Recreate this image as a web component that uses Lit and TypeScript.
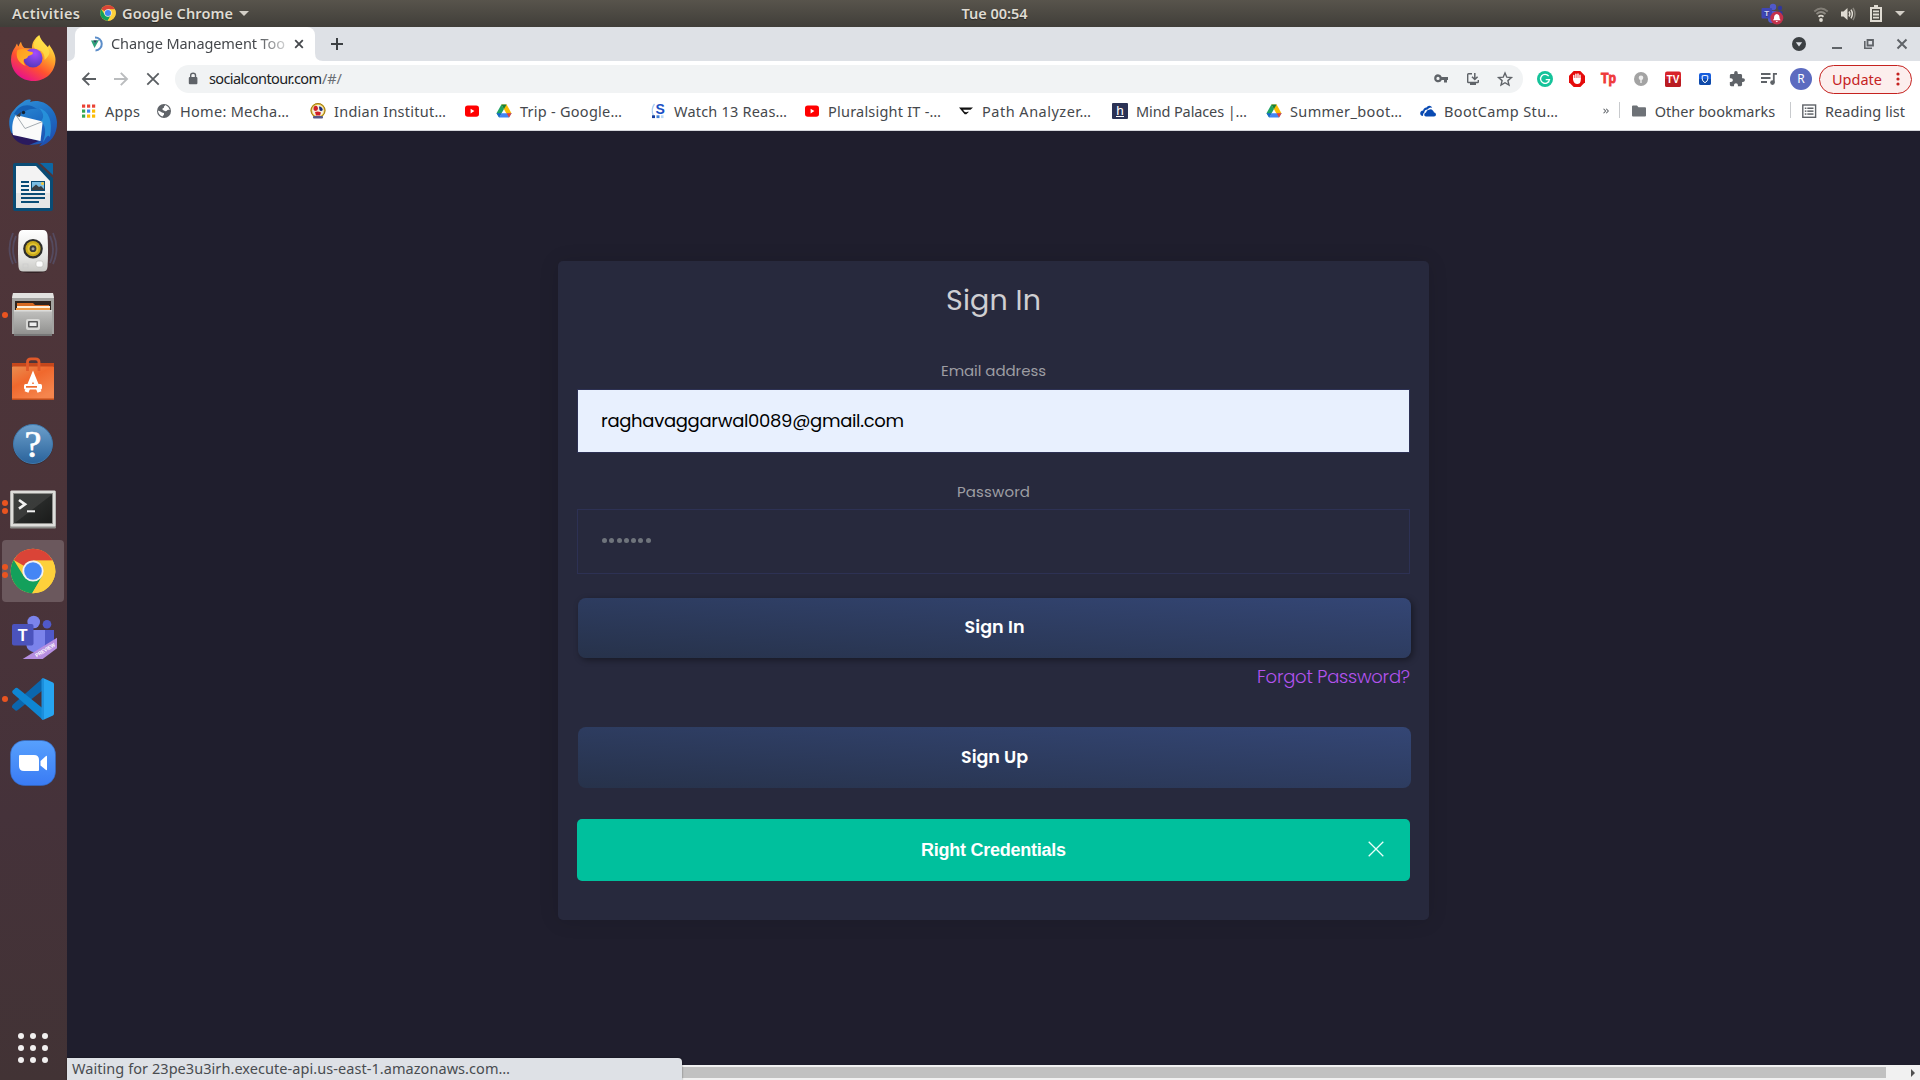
import { LitElement, html, svg, css, nothing } from "lit";
import { customElement, property } from "lit/decorators.js";
import { styleMap } from "lit/directives/style-map.js";

/* ---------- text label spread to a fixed measure ---------- */

@customElement("fit-label")
class FitLabel extends LitElement {
  @property() text = "";
  @property({ type: Number }) w = 0;

  static styles = css`
    :host { display: block; flex: none; white-space: pre; }
    .box { display: block; overflow: visible; }
    .t { display: inline-block; }
  `;

  firstUpdated() {
    const t = this.renderRoot.querySelector(".t") as HTMLElement;
    const n = this.text.length;
    if (n > 1 && this.w) {
      const natural = t.getBoundingClientRect().width;
      t.style.letterSpacing = ((this.w - natural) / (n - 1)).toFixed(3) + "px";
    }
  }

  render() {
    return html`<span class="box" style=${styleMap({ width: this.w + "px" })}><span class="t">${this.text}</span></span>`;
  }
}

/* ---------- icons ---------- */

const chromeLogo = svg`
  <circle cx="24" cy="24" r="22.3" fill="#fdd03b"/>
  <path d="M24 24 L4.7 12.9 A22.3 22.3 0 0 1 43.7 13.5 L24 13.5Z" fill="#da4437"/>
  <path d="M24 24 L43.6 13.5 L24 13.5 L14.5 19Z" fill="#da4437"/>
  <path d="M4.7 12.9 A22.3 22.3 0 0 0 23.2 46.3 L33.2 29.2 L24 33 L14.8 29.2Z" fill="#13a05b"/>
  <path d="M33.2 29.2 L23.2 46.3 A22.3 22.3 0 0 0 43.7 13.5 L24 13.5Z" fill="#fdd03b"/>
  <circle cx="24" cy="24" r="10.6" fill="#f1f1f1"/>
  <circle cx="24" cy="24" r="8.8" fill="#4486f5"/>`;

const drive = svg`
  <path d="M5.4 1.5h5.2l5 9h-5.2z" fill="#fbbc04"/>
  <path d="M5.4 1.5 8 6 3.1 14.5.5 10.3z" fill="#1ea362"/>
  <path d="M5.4 1.5h5.2L8 6z" fill="#188038"/>
  <path d="M5.6 10.3h10L13 14.5H3.1z" fill="#4285f4"/>
  <path d="M10.6 10.3h5L13 14.5z" fill="#ea4335"/>
  <path d="M.5 10.3h5.1l-2.5 4.2z" fill="#1967d2"/>`;

const youtube = svg`<rect x="1" y="2.4" width="14" height="11.4" rx="2.8" fill="#f00"/><path d="M6.6 5.8v4.6l3.8-2.3z" fill="#fff"/>`;

const dockIcons: Record<string, unknown> = {
  firefox: svg`
    <defs>
      <linearGradient id="ff1" x1=".8" y1=".05" x2=".25" y2=".95"><stop offset="0" stop-color="#fff44f"/><stop offset=".35" stop-color="#ffa52a"/><stop offset=".65" stop-color="#ff5130"/><stop offset="1" stop-color="#e8118c"/></linearGradient>
      <radialGradient id="ff2" cx=".6" cy=".25" r=".8"><stop offset="0" stop-color="#a64bff"/><stop offset="1" stop-color="#5038b8"/></radialGradient>
      <linearGradient id="ff3" x1="0" y1="0" x2="1" y2="1"><stop offset="0" stop-color="#ff9a1f"/><stop offset="1" stop-color="#ffbd2e"/></linearGradient>
    </defs>
    <path d="M2 25C2 19 4 15 6.5 11.500C7 10 7.500 9 8 8.500C8.500 10 9 11 9.500 11.500C10 9.500 11 8 12 6.700C12.500 9 13.500 11.500 15.500 13L23 13.500C22.500 8 26 3 30.300 0C31.500 5 35.500 8 38.500 12C39.500 11.500 40 10.500 40 9.500C43 14 46.700 19 46.500 25C46 38 36 46 24.500 46C12 46 2.500 37 2 25Z" fill="url(#ff1)"/>
    <path d="M30.500 1C24.500 6 23 11 26.500 14C34 15 36 20 35.500 25C41 20 42 17 38 11.500C34.500 8 31.500 5 30.500 1Z" fill="#ffe14a" opacity=".75"/>
    <circle cx="24" cy="23" r="9.600" fill="url(#ff2)"/>
    <path d="M8.500 15C13 13 17 14 19 16C21 17 24 16.500 24 18C23.500 20.500 19.500 20 19 21.500C18.500 23 17 24 15.500 24C13.500 25 15 29 17 31C9 28 6 21 8.500 15Z" fill="url(#ff3)"/>`,
  thunderbird: svg`
    <defs><linearGradient id="tb1" x1=".2" y1="0" x2=".7" y2="1"><stop offset="0" stop-color="#2f8fd8"/><stop offset=".5" stop-color="#1d6ec4"/><stop offset="1" stop-color="#1f4fb0"/></linearGradient></defs>
    <path d="M14 3C16 1 19 0 22 1L21 3C34 -1 47 9 48 23C48.500 36 41 45 30 47.500L33 44C22 48 8 45 3 35C-1 28-1 16 5 11C8 7 11 5 14 3Z" fill="url(#tb1)"/>
    <path d="M2 34C5 42 12 46 20 46L30 42L5 35Z" fill="#2a1a5e"/>
    <path d="M7 16L33.700 22.500L31.500 42L4 36C2.500 30 3 21 7 16Z" fill="#fafafa"/>
    <path d="M7 16L16 29.500L33.700 22.500" fill="none" stroke="#9aa1a8" stroke-width=".9"/>
    <path d="M30 9C40 12 44 22 41 38C38 34 37 40 34 43C38 32 36 26 32 22C36 18 34 13 30 9Z" fill="#2a9be0" opacity=".75"/>
    <path d="M5 15C9 6 20 3 28 10C20 9 14 13 11 17Z" fill="#1660b5"/>
    <circle cx="14.500" cy="13.500" r="1.700" fill="#123"/><path d="M7 17L12 13L11 18Z" fill="#3b3f46"/>`,
  writer: svg`
    <path d="M6 0H28L44 15V46Q44 48 42 48H6Q4 48 4 46V2Q4 0 6 0Z" fill="#0a4c75"/>
    <path d="M31 0H43Q44 0 44 1V12Z" fill="#0d67a4"/>
    <path d="M7 3H27L41 18V45H7Z" fill="#f3f3f3"/><path d="M7 30H41V45H7Z" fill="#e0e0e0" opacity=".7"/>
    <g fill="#0a4c75"><rect x="12" y="18" width="8" height="2"/><rect x="12" y="22" width="8" height="2"/><rect x="12" y="26" width="8" height="2"/><rect x="12" y="30" width="24" height="2"/><rect x="12" y="34" width="24" height="2"/><rect x="12" y="38" width="18" height="2"/></g>
    <rect x="22" y="18" width="14" height="10" fill="#0a4c75"/><rect x="23" y="19" width="12" height="8" fill="#7bbde2"/>
    <path d="M23 27V25L27 21.500L30 24L32 23L35 26V27Z" fill="#3b3f42"/><circle cx="33.500" cy="20.500" r="1.500" fill="#f5c63a"/>`,
  rhythmbox: svg`
    <defs><linearGradient id="rb1" x1="0" y1="0" x2="0" y2="1"><stop offset="0" stop-color="#fff"/><stop offset=".7" stop-color="#e2e2e0"/><stop offset="1" stop-color="#c9c9c6"/></linearGradient></defs>
    <g fill="none" stroke="#5e6c99" stroke-opacity=".4" stroke-width="1.800"><path d="M7 9Q1 22 7 36M4 6Q-3 22 4 37M41 9Q47 22 41 36M44 6Q51 22 44 37"/></g>
    <ellipse cx="24" cy="44" rx="13" ry="2" fill="#000" opacity=".35"/>
    <path d="M14 3H34Q38 3 38.500 8Q39.500 24 38.500 40Q38 44.500 34 44.500H14Q10 44.500 9.500 40Q8.500 24 9.500 8Q10 3 14 3Z" fill="url(#rb1)"/>
    <circle cx="24" cy="21.700" r="9.800" fill="#2d2d2b"/><circle cx="24" cy="21.700" r="7.600" fill="#c9a91a"/><circle cx="24" cy="21.700" r="5.500" fill="#e2c534"/><circle cx="24" cy="21.700" r="3.400" fill="#3c3c3a"/><circle cx="24" cy="21.700" r="1.500" fill="#a7a79f"/>
    <rect x="14" y="37" width="5" height="4" fill="none" stroke="#ccc" stroke-width=".7"/><rect x="27" y="34" width="7" height="6" rx="2" fill="#fbfbfb" stroke="#bdbdb9" stroke-width=".6"/>`,
  files: svg`
    <defs><linearGradient id="fl1" x1="0" y1="0" x2="0" y2="1"><stop offset="0" stop-color="#c2c2c0"/><stop offset="1" stop-color="#8d8d8b"/></linearGradient></defs>
    <path d="M4 2H44L45 8V43H3V8Z" fill="#a3a3a1"/><path d="M4 2H44L45 7H3Z" fill="#e2e2e0"/>
    <rect x="6" y="10" width="36" height="12" fill="#2e241f"/>
    <path d="M8 12H24L26 14H40V21H8Z" fill="#d76a22"/><rect x="8" y="15" width="33" height="2" fill="#fff0dc"/><rect x="7" y="17" width="34" height="4" fill="#f09a45"/>
    <path d="M5 19H43V45H5Z" fill="url(#fl1)"/><path d="M5 19H43V20.500H5Z" fill="#dcdcda"/><path d="M5 43H43V45H5Z" fill="#777"/>
    <rect x="17" y="28" width="14" height="11" rx="2" fill="#d8d8d6"/><rect x="19" y="30" width="10" height="6.500" rx="1" fill="#555"/><rect x="20.500" y="31.500" width="7" height="3.500" fill="#eee"/>`,
  software: svg`
    <defs><linearGradient id="sw1" x1="0" y1="0" x2=".6" y2="1"><stop offset="0" stop-color="#e99355"/><stop offset=".5" stop-color="#f0682d"/><stop offset="1" stop-color="#f5854d"/></linearGradient></defs>
    <path d="M3 8H45V12H3Z" fill="#a6320e"/><path d="M3 12L6 8H42L45 12V44.500H3Z" fill="url(#sw1)"/><rect x="3" y="43.500" width="42" height="1.300" fill="#c14a17"/>
    <path d="M3 8H45V11.500H3Z" fill="#c4471c"/>
    <path d="M18.500 16V7Q18.500 3.800 22 3.800H26.500Q30 3.800 30 7V16" fill="none" stroke="#e0592a" stroke-width="2.800"/>
    <path d="M17.500 37L24 21L30.500 37" fill="none" stroke="#fff" stroke-width="4.200"/>
    <rect x="15" y="29" width="18" height="5.500" fill="#fff" rx="1.500"/><rect x="17" y="31" width="11" height="1.700" fill="#ef6c2f"/>`,
  help: svg`
    <defs><linearGradient id="hp1" x1="0" y1="0" x2="0" y2="1"><stop offset="0" stop-color="#6c9fcb"/><stop offset="1" stop-color="#2a639b"/></linearGradient></defs>
    <circle cx="24" cy="25.700" r="20" fill="#2a2024" opacity=".5"/><circle cx="24" cy="25" r="19.500" fill="url(#hp1)" stroke="#3f79ad"/>
    <text x="24" y="38" text-anchor="middle" font-family="Liberation Serif, serif" font-size="38" fill="#fff" stroke="#fff" stroke-width=".7">?</text>`,
  terminal: svg`
    <defs><linearGradient id="tm1" x1="0" y1="0" x2="1" y2="1"><stop offset="0" stop-color="#3b3f3d"/><stop offset=".5" stop-color="#3a3b3a"/><stop offset=".52" stop-color="#272928"/><stop offset="1" stop-color="#1a1b1a"/></linearGradient></defs>
    <rect x="1" y="8" width="46" height="37.500" rx="1" fill="#8b8b88"/><rect x="1.500" y="7.500" width="45" height="36" rx="1" fill="#dededb"/>
    <rect x="4" y="10" width="40" height="31" fill="#8e8e8b"/><rect x="5" y="11" width="38" height="29" fill="url(#tm1)"/>
    <path d="M10 17L16 21.300L10 25.600" fill="none" stroke="#f2f2f2" stroke-width="2.700"/><rect x="18" y="27.300" width="8" height="2" fill="#f2f2f2"/>`,
  chrome: chromeLogo,
  teams: svg`
    <circle cx="38" cy="13.300" r="4.300" fill="#5059c9"/><path d="M34 19H45V32Q45 38 38 40L34 38Z" fill="#5059c9"/>
    <circle cx="24.700" cy="11" r="6.300" fill="#7b83eb"/><path d="M17 19H36V33Q36 41 27 41.500Q18 41 17 33Z" fill="#7b83eb"/>
    <rect x="3" y="13" width="21.500" height="21.500" rx="2" fill="#4b53bc"/>
    <text x="13.700" y="29.500" text-anchor="middle" font-family="Liberation Sans, sans-serif" font-weight="700" font-size="16" fill="#fff">T</text>
    <path d="M13.700 48L48 26.700V37.300L33.700 48Z" fill="#b58ee0"/>
    <text transform="translate(27.800 46.500) rotate(-32)" font-family="Liberation Sans, sans-serif" font-weight="700" font-size="5.500" textLength="22" lengthAdjust="spacingAndGlyphs" fill="#fff">PREVIEW</text>`,
  vscode: svg`
    <path d="M3 32.500L6.500 35.500Q7.500 36 8.500 35.300L34 15V3L4 29.500Q2.500 31 3 32.500Z" fill="#0b66ad"/>
    <path d="M4 18.500Q2.500 17 3.500 15.800L6.500 13Q7.500 12.300 8.500 13L34 33.500V45Z" fill="#0f86d2"/>
    <path d="M34 3L44 7.500Q45 8 45 9.500V38.500Q45 40 44 40.500L34 45Q35 44.500 35 42V6Q35 4 34 3Z" fill="#27a5f1"/>
    <path d="M32.500 4L34 3L35 4V44L34 45L32.500 44Z" fill="#1c8fdc"/>`,
  zoom: svg`
    <defs><linearGradient id="zm1" x1="0" y1="0" x2="0" y2="1"><stop offset="0" stop-color="#57a0fd"/><stop offset="1" stop-color="#3a7bf4"/></linearGradient></defs>
    <rect x="1.500" y="1.500" width="45" height="45" rx="14" fill="url(#zm1)" stroke="#3069c8" stroke-width=".6"/>
    <path d="M10 17Q10 16 11 16H25Q30 16 30 21V31Q30 32 29 32H15Q10 32 10 27Z" fill="#fff"/><path d="M31.500 22L37 17Q38 16.500 38 17.500V30.500Q38 31.500 37 31L31.500 26.500Z" fill="#fff"/>`,
};

const globe = svg`<circle cx="8" cy="8" r="7" fill="#5f6368"/><path d="M1.800 7.500Q4 8 5.500 9.200Q6.500 10 8 10V11.500L6.500 13.500Q2.800 12.500 1.800 7.500ZM6.500 5.500Q8.500 5 8 3.500L9.500 2Q13 3.500 13.800 7Q12 6 10.500 8Q9 8.500 8 7.500Q6 7.500 6.500 5.500Z" fill="#fff"/>`;

const bookmarkIcons: Record<string, unknown> = {
  apps: svg`
    <g fill="#ea4335"><rect x="1" y="1.500" width="3.200" height="3.200"/><rect x="6" y="1.500" width="3.200" height="3.200"/><rect x="11" y="1.500" width="3.200" height="3.200"/></g>
    <rect x="1" y="6.500" width="3.200" height="3.200" fill="#34a853"/><rect x="6" y="6.500" width="3.200" height="3.200" fill="#4285f4"/><rect x="11" y="6.500" width="3.200" height="3.200" fill="#fbbc04"/>
    <rect x="1" y="11.500" width="3.200" height="3.200" fill="#34a853"/><rect x="6" y="11.500" width="3.200" height="3.200" fill="#fbbc04"/><rect x="11" y="11.500" width="3.200" height="3.200" fill="#fbbc04"/>`,
  globe,
  iit: svg`<circle cx="8" cy="7.500" r="7.500" fill="#e8c23a"/><circle cx="8" cy="7.500" r="5.800" fill="#f5f0e0"/><path d="M4 3.500Q7 1.500 8 5Q8 8 5 8Q2.500 7 4 3.500Z" fill="#cf2027"/><path d="M9 3.500Q12 3 12.800 7Q11 9 9.500 7Z" fill="#1c2c7a"/><path d="M5 9Q8 8 11 9.500L10 12.500H6Z" fill="#cf2027"/><circle cx="8" cy="7.500" r="7" fill="none" stroke="#9e7a1d" stroke-width="1"/><rect x="3" y="13" width="10" height="2.500" rx="1" fill="#555a88"/>`,
  youtube,
  drive,
  watch: svg`<path d="M4.500 1Q.5 6 3.500 13" fill="none" stroke="#a9cdf0" stroke-width="1.300"/><text x="5.500" y="10.800" font-family="Liberation Sans, sans-serif" font-weight="700" font-size="14" fill="#1a4fc4">S</text><rect x="2" y="12.300" width="3" height="2.800" fill="#173f9e"/><rect x="6.500" y="12.300" width="3" height="2.800" fill="#3f7fd8"/><rect x="11" y="12.300" width="2.500" height="2.800" fill="#b8d8f4"/>`,
  path: svg`<path d="M1 4.500H15L12.500 6.700H5L6.500 8.800H11L8.300 11.200H6.700Z" fill="#111"/><path d="M6.500 8H10L8 9.500Z" fill="#fff"/>`,
  mind: svg`<rect width="16" height="16" rx="1" fill="#2b3255"/><text x="8" y="11.800" text-anchor="middle" font-family="Liberation Sans, sans-serif" font-size="13.500" fill="#fff">h</text><path d="M4 13.500H12" stroke="#fff" stroke-width="1"/>`,
  onedrive: svg`<path d="M.2 11Q0 7.800 3.200 7.600Q3.500 4.800 6.500 4.500Q8 2 10.500 3Q11.800 3.500 12.200 4.800Q9.500 4 7.500 6.500Q4.500 6.500 4.300 9.500Q2.800 10.300 3 13Q.5 13 .2 11Z" fill="#094ab2"/><path d="M4.200 11.700Q4.300 9.800 6 9.600Q6.500 7 9 6.800Q11 5.200 12.800 7.500Q13.800 8 13.800 9.300Q16 9.500 16 11.400Q16 13.300 14 13.400H6Q4.200 13.300 4.200 11.700Z" fill="#094ab2"/>`,
  folder: svg`<path d="M1 3.500Q1 2.500 2 2.500H6L7.500 4.300H14Q15 4.300 15 5.300V12.500Q15 13.500 14 13.500H2Q1 13.500 1 12.500Z" fill="#6e7277"/>`,
  reading: svg`<rect x="1.800" y="2" width="12.800" height="12.300" fill="none" stroke="#5f6368" stroke-width="1.400"/><g fill="#5f6368"><rect x="3.800" y="4.500" width="1.600" height="1.500"/><rect x="6.300" y="4.500" width="6.200" height="1.500"/><rect x="3.800" y="7.400" width="1.600" height="1.500"/><rect x="6.300" y="7.400" width="6.200" height="1.500"/><rect x="3.800" y="10.300" width="1.600" height="1.500"/><rect x="6.300" y="10.300" width="6.200" height="1.500"/></g>`,
};

const extensionIcons = [
  svg`<circle cx="8" cy="8" r="8" fill="#15c39a"/><path d="M11.700 5.200A4.500 4.500 0 1 0 12.500 8.700H8.700M12.400 8.500L11.500 11.500" fill="none" stroke="#fff" stroke-width="1.300"/>`,
  svg`<path d="M4.700 0H11.300L16 4.700V11.300L11.300 16H4.700L0 11.300V4.700Z" fill="#e50b0b"/><path d="M4.800 8V4.500M6.900 7.500V3.200M9 7.500V3M11 8V4.200" stroke="#fff" stroke-width="1.400" stroke-linecap="round"/><path d="M4.100 7H11.700V9.500Q11.500 13 8.200 13Q5 13 4.100 9Z" fill="#fff"/>`,
  svg`<text x="0" y="12.300" font-family="Liberation Sans, sans-serif" font-weight="700" font-size="14" textLength="15" lengthAdjust="spacingAndGlyphs" fill="#ef3b3b" stroke="#ef3b3b" stroke-width=".9">Tp</text>`,
  svg`<circle cx="8" cy="8" r="7" fill="#a3a3a3"/><circle cx="8" cy="6.700" r="2.300" fill="#eee"/><path d="M8 8V12" stroke="#eee" stroke-width="1.400"/>`,
  svg`<rect y=".5" width="16" height="15.500" rx="2" fill="#d8232a"/><path d="M0 8H16V14Q16 16 14 16H2Q0 16 0 14Z" fill="#b91c22"/><text x="8" y="12" text-anchor="middle" font-family="Liberation Sans, sans-serif" font-weight="700" font-size="10" fill="#fff">TV</text>`,
  svg`<rect x="2" y="2" width="12" height="12" rx="2" fill="#175ddc"/><path d="M2 8H14V12Q14 14 12 14H4Q2 14 2 12Z" fill="#0f4aa8"/><path d="M5.200 4.800Q7.500 4.800 8 4.300Q8.500 4.800 10.800 4.800V8Q10.500 10.500 8 11.700Q5.500 10.500 5.200 8Z" fill="none" stroke="#fff" stroke-width="1"/>`,
  svg`<path transform="translate(-.6 -.6) scale(.72)" d="M20.500 11H19V7c0-1.100-.9-2-2-2h-4V3.500a2.500 2.500 0 0 0-5 0V5H4c-1.100 0-1.990.9-1.990 2v3.800H3.500c1.490 0 2.700 1.210 2.700 2.700s-1.210 2.700-2.700 2.700H2V20c0 1.100.9 2 2 2h3.800v-1.500c0-1.490 1.210-2.700 2.700-2.700s2.700 1.210 2.700 2.700V22H17c1.100 0 2-.9 2-2v-4h1.500a2.500 2.500 0 0 0 0-5z" fill="#5f6368"/>`,
  svg`<path d="M0 3H9.500M0 7H9.500M0 11H6" stroke="#5f6368" stroke-width="1.800"/><path d="M12.800 11.500V2.800H16" fill="none" stroke="#5f6368" stroke-width="1.800"/><circle cx="11.500" cy="11.600" r="2.300" fill="#5f6368"/>`,
];

/* ---------- GNOME top bar ---------- */

@customElement("top-bar")
class TopBar extends LitElement {
  static styles = css`
    :host { box-sizing: border-box; display: grid; grid-template-columns: 1fr auto 1fr; align-items: center; height: 27px; padding-bottom: 2px; background: linear-gradient(#58544c, #403e39); color: #dfdbd2; font: 600 14.500px/24px "Noto Sans", "Open Sans", sans-serif; text-shadow: 0 1px 1px rgba(0,0,0,.4); }
    .left, .right { display: flex; align-items: center; height: 25px; }
    .left { padding-left: 12px; }
    .right { justify-content: flex-end; padding-right: 15px; }
    .logo { width: 16px; height: 16px; margin: 0 6px 0 20px; }
    .caret { width: 10px; height: 5px; margin: 2px 0 0 6px; }
    .clock { margin-left: 69px; }
    .teams { width: 24px; height: 22px; margin: 2px 29px 0 0; }
    .wifi { width: 16px; height: 16px; margin: 2px 11px 0 0; }
    .vol { width: 17px; height: 16px; margin: 2px 13px 0 0; }
    .bat { width: 12px; height: 17px; margin: 2px 7px 0 0; }
  `;
  render() {
    const caret = html`<svg class="caret" viewBox="0 0 10 5"><path d="M0 0H10L5 5Z" fill="#d3cfc7"/></svg>`;
    return html`
      <div class="left">
        <fit-label text="Activities" .w=${68}></fit-label>
        <svg class="logo" viewBox="1 1 46 46">${chromeLogo}</svg>
        <fit-label text="Google Chrome" .w=${111}></fit-label>${caret}
      </div>
      <fit-label class="clock" text="Tue 00:54" .w=${66}></fit-label>
      <div class="right">
        <svg class="teams" viewBox="0 0 24 22">
          <circle cx="13" cy="4" r="3.200" fill="#5059c9"/><circle cx="20" cy="5" r="2.200" fill="#32379a"/><rect x="8" y="8" width="10" height="12" rx="4" fill="#5059c9"/><rect x="18" y="8" width="4.500" height="8" rx="1.500" fill="#32379a"/>
          <rect x="1.500" y="5" width="10.500" height="10.500" rx="1" fill="#3f46b5"/>
          <text x="6.800" y="13" text-anchor="middle" font-family="Liberation Sans, sans-serif" font-size="8" font-weight="700" fill="#d7d7ee">T</text>
          <circle cx="16.800" cy="15" r="6.500" fill="#c4314b"/><path d="M16.800 11Q19.800 11.500 19.600 15.500L20.600 17.200H13L14 15.500Q13.800 11.500 16.800 11ZM15.600 18H18L16.800 19.300Z" fill="#fff"/>
        </svg>
        <svg class="wifi" viewBox="0 0 16 16"><g fill="none" stroke="#dfdbd2" stroke-width="1.800"><path d="M1.300 5.500Q8-.5 14.700 5.500" opacity=".35"/><path d="M3.500 8Q8 4 12.500 8" opacity=".45"/><path d="M5.500 10.700Q8 8.500 10.500 10.700"/></g><circle cx="8" cy="14" r="1.900" fill="#dfdbd2"/></svg>
        <svg class="vol" viewBox="0 0 17 16"><path d="M1 5.500H3.500L7.500 2V14L3.500 10.500H1Z" fill="#dfdbd2"/><g fill="none" stroke="#dfdbd2" stroke-width="1.500"><path d="M9 5.500Q10.700 8 9 10.500"/><path d="M11 3.700Q13.700 8 11 12.300"/><path d="M13 2Q16.800 8 13 14" opacity=".4"/></g></svg>
        <svg class="bat" viewBox="0 0 12 17"><path d="M4 0H8V2H12V17H0V2H4Z" fill="#dfdbd2"/><rect x="2" y="4" width="8" height="11" fill="#4b4842"/><path d="M3 6.300H9M3 9.500H9M3 12.700H9" stroke="#dfdbd2" stroke-width="1.800"/></svg>
        ${caret}
      </div>`;
  }
}

/* ---------- launcher ---------- */

@customElement("app-dock")
class AppDock extends LitElement {
  static styles = css`
    :host { display: flex; flex-direction: column; width: 67px; height: 1053px; background: linear-gradient(#51363a, #4b3439 45%, #45323a 75%, #423335); }
    .slot { position: relative; display: flex; height: 64px; width: 66px; align-items: center; justify-content: center; flex: none; }
    .plate { display: flex; width: 62px; height: 62px; align-items: center; justify-content: center; border-radius: 4px; }
    .active { background: #6b585d; }
    .icon { width: 48px; height: 48px; overflow: visible; }
    .dots { position: absolute; left: 2px; top: 0; height: 64px; display: flex; flex-direction: column; justify-content: center; gap: 2.500px; }
    .dot { width: 6px; height: 6px; border-radius: 3px; background: #e95420; }
    .grid { margin-top: auto; }
  `;
  render() {
    const entries: [string, number, boolean?][] = [
      ["firefox", 0], ["thunderbird", 0], ["writer", 0], ["rhythmbox", 0], ["files", 1], ["software", 0],
      ["help", 0], ["terminal", 2], ["chrome", 2, true], ["teams", 0], ["vscode", 1], ["zoom", 0],
    ];
    return html`
      ${entries.map(([name, running, active]) => html`
        <div class="slot">
          <div class="plate ${active ? "active" : ""}"><svg class="icon" viewBox="0 0 48 48">${dockIcons[name]}</svg></div>
          ${running ? html`<div class="dots">${Array.from({ length: running }, () => html`<i class="dot"></i>`)}</div>` : nothing}
        </div>`)}
      <div class="slot grid">
        <svg class="icon" viewBox="0 0 48 48">${[12, 24, 36].map((y) => [12, 24, 36].map((x) => svg`<circle cx=${x} cy=${y} r="3" fill="#f2f0f0"/>`))}</svg>
      </div>`;
  }
}

/* ---------- browser chrome ---------- */

@customElement("browser-head")
class BrowserHead extends LitElement {
  static styles = css`
    :host { display: block; height: 104px; background: #fff; color: #45484c; font: 14.500px/20px "Noto Sans", "Open Sans", sans-serif; }
    .strip { display: flex; align-items: center; height: 34px; background: #dee1e6; }
    .foot { width: 8px; height: 34px; flex: none; }
    .tab { display: flex; align-items: center; width: 240px; height: 34px; background: #fff; border-radius: 8px 8px 0 0; }
    .fav { width: 16px; height: 16px; margin: 0 6px 0 14px; }
    .title { width: 175px; padding-bottom: 2px; -webkit-mask-image: linear-gradient(90deg, #000 145px, rgba(0,0,0,.25) 174px); }
    .tabx { width: 10px; height: 10px; margin-left: 8px; }
    .plus { width: 12px; height: 12px; margin-left: 8px; }
    .controls { display: flex; align-items: center; margin-left: auto; padding-right: 2px; }
    .ctl { display: flex; width: 32px; justify-content: center; }
    .g { width: 14px; height: 14px; overflow: visible; }
    .search { margin-right: 16px; }
    .tools { display: flex; align-items: center; height: 36px; padding: 0 8px 0 6px; }
    .slot { display: flex; width: 32px; height: 32px; flex: none; align-items: center; justify-content: center; }
    .i { width: 16px; height: 16px; flex: none; overflow: visible; }
    .omni { display: flex; flex: 1; align-items: center; height: 28px; margin: 0 6px; padding: 0 2px 0 10px; border-radius: 14px; background: #f1f3f4; }
    .host { margin-left: 8px; padding-bottom: 2px; color: #202124; }
    .path { flex: 1; padding-bottom: 2px; color: #6b6f74; }
    .avatar { width: 22px; height: 22px; border-radius: 11px; background: #5c6bc0; color: #fff; font-size: 12px; line-height: 22px; text-align: center; }
    .update { box-sizing: border-box; display: flex; align-items: center; width: 93px; height: 29px; margin-left: 2px; padding-left: 12px; gap: 14px; border: 1px solid #c5221f; border-radius: 15px; background: #fceeed; color: #c5221f; }
    .kebab { width: 4px; height: 14px; }
    .marks { display: flex; align-items: center; height: 28px; padding: 0 15px 5px 14px; border-bottom: 1px solid #d5d7dc; }
    .mark { display: flex; align-items: center; gap: 8px; flex: none; }
    .more { width: 8px; height: 8px; margin-left: 29px; }
    .sep { width: 1px; height: 16px; background: #c8cacd; margin: -2px 11px 0 10px; }
    .s2 { margin-left: 15px; margin-right: 10px; }
  `;
  render() {
    const marks: [string, string, number, number][] = [
      ["apps", "Apps", 35, 75], ["globe", "Home: Mecha…", 109, 154], ["iit", "Indian Institut…", 112, 154],
      ["youtube", "", 0, 32], ["drive", "Trip - Google…", 102, 154], ["watch", "Watch 13 Reas…", 113, 154],
      ["youtube", "Pluralsight IT -…", 113, 154], ["path", "Path Analyzer…", 109, 154], ["mind", "Mind Palaces |…", 111, 154],
      ["drive", "Summer_boot…", 112, 154], ["onedrive", "BootCamp Stu…", 114, 154],
    ];
    return html`
      <div class="strip">
        <svg class="foot" viewBox="0 0 8 34"><path d="M8 26V34H0Q8 34 8 26Z" fill="#fff"/></svg>
        <div class="tab">
          <svg class="fav" viewBox="0 0 16 16"><path d="M6 1.500A6.500 6.500 0 1 1 6.500 14.500" fill="none" stroke="#5b8dc9" stroke-width="2"/><path d="M2 4.500L5.500 12L10 4L7.500 4.500L6 7L4.500 4.500Z" fill="#2fa37b"/><path d="M4.300 4.300L6 7.500L8 4.300Z" fill="#24465a"/></svg>
          <div class="title"><fit-label text="Change Management Too" .w=${174}></fit-label></div>
          <svg class="tabx" viewBox="0 0 10 10"><path d="M1.200 1.200L8.800 8.800M8.800 1.200L1.200 8.800" stroke="#45484c" stroke-width="1.800"/></svg>
        </div>
        <svg class="foot" viewBox="0 0 8 34"><path d="M0 26V34H8Q0 34 0 26Z" fill="#fff"/></svg>
        <svg class="plus" viewBox="0 0 12 12"><path d="M6 0V12M0 6H12" stroke="#3c4043" stroke-width="2"/></svg>
        <div class="controls">
          <svg class="g search" viewBox="0 0 14 14"><circle cx="7" cy="7" r="7" fill="#3c4043"/><path d="M3.800 5.200H10.200L7 9.400Z" fill="#dee1e6"/></svg>
          <div class="ctl"><svg class="g" viewBox="0 0 14 14"><path d="M1 11H11" stroke="#5f6368" stroke-width="2"/></svg></div>
          <div class="ctl"><svg class="g" viewBox="0 0 14 14"><path d="M4.500 3H10V8.500H4.500Z" fill="none" stroke="#5f6368" stroke-width="1.800"/><path d="M1.800 4V11.200H9" fill="none" stroke="#5f6368" stroke-width="1.600"/></svg></div>
          <div class="ctl"><svg class="g" viewBox="0 0 14 14"><path d="M2.500 2.500L11.500 11.500M11.500 2.500L2.500 11.500" stroke="#5f6368" stroke-width="2"/></svg></div>
        </div>
      </div>
      <div class="tools">
        <div class="slot"><svg class="i" viewBox="0 0 16 16"><path d="M15 8H2.500M8.200 1.800L2 8L8.200 14.200" fill="none" stroke="#5a5e62" stroke-width="1.900"/></svg></div>
        <div class="slot"><svg class="i" viewBox="0 0 16 16"><path d="M1 8H13.500M7.800 1.800L14 8L7.800 14.200" fill="none" stroke="#babcbe" stroke-width="1.900"/></svg></div>
        <div class="slot"><svg class="i" viewBox="0 0 16 16"><path d="M2.300 2.300L13.700 13.700M13.700 2.300L2.300 13.700" stroke="#5a5e62" stroke-width="1.800"/></svg></div>
        <div class="omni">
          <svg class="i" viewBox="0 0 16 16"><rect x="3.800" y="6" width="8.600" height="7.300" rx="1" fill="#5f6368"/><path d="M5.700 6V4.300Q5.700 2.300 8.100 2.300Q10.500 2.300 10.500 4.300V6" fill="none" stroke="#5f6368" stroke-width="1.400"/></svg>
          <fit-label class="host" text="socialcontour.com" .w=${113}></fit-label><fit-label class="path" text="/#/" .w=${20}></fit-label>
          <div class="slot"><svg class="i" viewBox="0 0 16 16"><path d="M5 3.300A4 4 0 1 0 8.800 9H11V11.500H14V9H15V6H8.800A4 4 0 0 0 5 3.300ZM5 5.800A1.600 1.600 0 1 1 5 9A1.600 1.600 0 1 1 5 5.800Z" fill="#5f6368" fill-rule="evenodd"/></svg></div>
          <div class="slot"><svg class="i" viewBox="0 0 16 16"><path d="M7 2.700H3.500Q2.700 2.700 2.700 3.500V10.700Q2.700 11.500 3.500 11.500H12.500Q13.300 11.500 13.300 10.700V9" fill="none" stroke="#5f6368" stroke-width="1.400"/><path d="M9.800 2V8M7 5.700L9.800 8.500L12.600 5.700" fill="none" stroke="#5f6368" stroke-width="1.500"/><rect x="5" y="12" width="6" height="2" fill="#5f6368"/></svg></div>
          <div class="slot"><svg class="i" viewBox="0 0 16 16"><path d="M8 2L9.800 6.200L14.400 6.600L10.900 9.600L12 14L8 11.700L4 14L5.100 9.600L1.600 6.600L6.200 6.200Z" fill="none" stroke="#5f6368" stroke-width="1.400"/></svg></div>
        </div>
        ${extensionIcons.map((icon) => html`<div class="slot"><svg class="i" viewBox="0 0 16 16">${icon}</svg></div>`)}
        <div class="slot"><div class="avatar">R</div></div>
        <div class="update"><fit-label text="Update" .w=${50}></fit-label><svg class="kebab" viewBox="0 0 4 14"><g fill="#c5221f"><circle cx="2" cy="2" r="1.600"/><circle cx="2" cy="7" r="1.600"/><circle cx="2" cy="12" r="1.600"/></g></svg></div>
      </div>
      <div class="marks">
        ${marks.map(([icon, label, w, span]) => html`<div class="mark" style=${styleMap({ width: span + "px" })}>
          <svg class="i" viewBox="0 0 16 16">${bookmarkIcons[icon]}</svg>${label ? html`<fit-label text=${label} .w=${w}></fit-label>` : nothing}
        </div>`)}
        <svg class="more" viewBox="0 0 8 8"><path d="M.7 1L3.500 4L.7 7M4.300 1L7.100 4L4.300 7" fill="none" stroke="#5f6368" stroke-width="1.400"/></svg>
        <i class="sep"></i>
        <div class="mark"><svg class="i" viewBox="0 0 16 16">${bookmarkIcons.folder}</svg><fit-label text="Other bookmarks" .w=${120.5}></fit-label></div>
        <i class="sep s2"></i>
        <div class="mark"><svg class="i" viewBox="0 0 16 16">${bookmarkIcons.reading}</svg><fit-label text="Reading list" .w=${80}></fit-label></div>
      </div>`;
  }
}

/* ---------- sign-in page ---------- */

@customElement("sign-in-card")
class SignInCard extends LitElement {
  static styles = css`
    :host { box-sizing: border-box; display: flex; flex-direction: column; align-items: center; width: 871px; height: 659px; padding: 22px 19px 0; border-radius: 5px; background: #27293d; box-shadow: 0 1px 20px rgba(0,0,0,.12); font-family: Poppins, Inter, "Open Sans", sans-serif; font-feature-settings: "cv11", "ss01" 0; }
    .title { margin-bottom: 44px; font-size: 28.500px; line-height: 34px; color: #cfcfd2; }
    .label { font-size: 15px; line-height: 20px; color: #9d9da3; }
    .field { box-sizing: border-box; display: flex; align-items: center; width: 833px; padding: 0 0 2px 23px; border: 1px solid #2d3154; }
    .email { height: 64px; margin: 8px 0 29px; background: #e8f0fe; color: #000; font-size: 18px; }
    .pass { height: 65px; margin: 7px 0 24px; }
    .dots { display: flex; gap: 2.300px; padding-left: 1px; }
    .dot { width: 5px; height: 5px; border-radius: 3px; background: #6f747c; }
    .btn { box-sizing: border-box; display: flex; justify-content: center; align-items: center; width: 833px; margin-left: 2px; border-radius: 8px; color: #fff; font-size: 17.500px; font-weight: 600; line-height: 24px; background: linear-gradient(to bottom left, #344675, #263148, #344675) top right / 210% 210%; }
    .in { height: 60px; padding: 0 0 3px 0; box-shadow: 2px 2px 6px rgba(0,0,0,.4); }
    .up { height: 61px; padding: 0 0 2px; }
    .forgot { align-self: flex-end; margin: 7px 0 38px; color: #b353ee; font-size: 18px; font-weight: 300; line-height: 24px; }
    .alert { display: grid; grid-template-columns: 1fr auto 1fr; align-items: center; width: 833px; height: 62px; margin-top: 31px; border-radius: 5px; background: #00c09d; color: #fff; font: 700 18px/24px "Liberation Sans", Arial, sans-serif; }
    .msg { grid-column: 2; }
    .close { justify-self: end; width: 16px; height: 16px; margin: 0 26px 2px 0; }
  `;
  render() {
    return html`
      <fit-label class="title" text="Sign In" .w=${95}></fit-label>
      <fit-label class="label" text="Email address" .w=${105}></fit-label>
      <div class="field email"><fit-label text="raghavaggarwal0089@gmail.com" .w=${303}></fit-label></div>
      <fit-label class="label" text="Password" .w=${73}></fit-label>
      <div class="field pass"><div class="dots">${Array.from({ length: 7 }, () => html`<i class="dot"></i>`)}</div></div>
      <div class="btn in"><fit-label text="Sign In" .w=${60}></fit-label></div>
      <fit-label class="forgot" text="Forgot Password?" .w=${153}></fit-label>
      <div class="btn up"><fit-label text="Sign Up" .w=${67}></fit-label></div>
      <div class="alert">
        <fit-label class="msg" text="Right Credentials" .w=${145}></fit-label>
        <svg class="close" viewBox="0 0 16 16"><path d="M.7.7L15.300 15.300M15.300.7L.7 15.300" stroke="#e9fffa" stroke-width="1.300"/></svg>
      </div>`;
  }
}

@customElement("app-root")
class AppRoot extends LitElement {
  static styles = css`
    :host { display: block; width: 1920px; height: 1080px; overflow: hidden; background: #1f1e2d; }
    .desk { display: flex; height: 1053px; }
    .window { position: relative; display: flex; flex-direction: column; width: 1853px; }
    .page { display: flex; justify-content: center; align-items: flex-start; flex: 1; padding-top: 130px; background: #1f1e2d; }
    .scroll { box-sizing: border-box; display: flex; align-items: center; justify-content: space-between; height: 15px; padding: 0 5px 0 15px; background: #f1f1f1; }
    .thumb { width: 1804px; height: 11px; background: #c1c1c1; }
    .arrow { width: 4px; height: 8px; }
    .status { position: absolute; left: 0; bottom: 0; box-sizing: border-box; width: 615px; height: 22px; padding-left: 5px; border-radius: 0 4px 0 0; background: #dee1e6; color: #494c50; box-shadow: 0 0 2px rgba(0,0,0,.5); font: 14.500px/21px "Noto Sans", "Open Sans", sans-serif; }
  `;
  render() {
    return html`
      <top-bar></top-bar>
      <div class="desk">
        <app-dock></app-dock>
        <div class="window">
          <browser-head></browser-head>
          <div class="page"><sign-in-card></sign-in-card></div>
          <div class="scroll"><div class="thumb"></div><svg class="arrow" viewBox="0 0 4 8"><path d="M0 0L4 4L0 8Z" fill="#505050"/></svg></div>
          <div class="status"><fit-label text="Waiting for 23pe3u3irh.execute-api.us-east-1.amazonaws.com…" .w=${438}></fit-label></div>
        </div>
      </div>`;
  }
}
